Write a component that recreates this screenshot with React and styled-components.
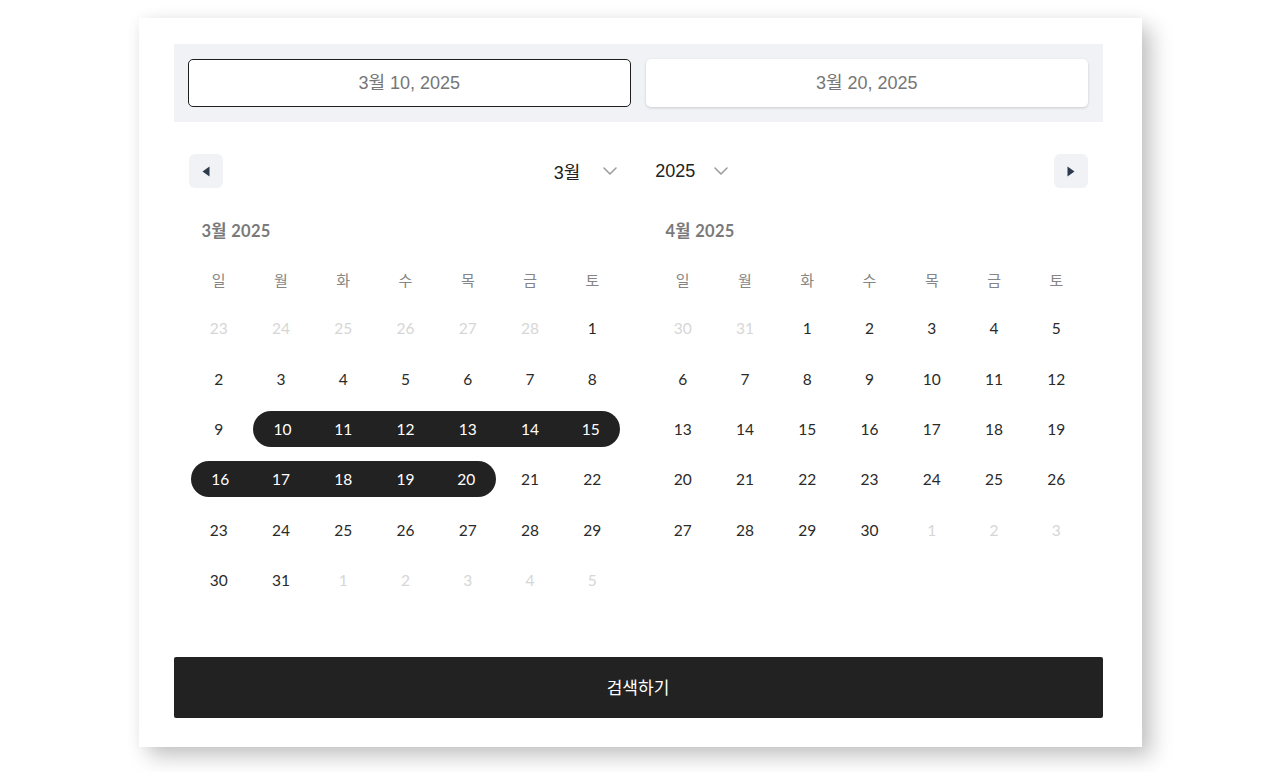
import React from "react";
import styled, { createGlobalStyle } from "styled-components";

const GlobalStyle = createGlobalStyle`
  * { box-sizing: border-box; }
  html, body { margin: 0; padding: 0; background: #ffffff; }
  body { font-family: "Liberation Sans", "Noto Sans CJK KR", sans-serif; }
`;

const Page = styled.div`
  width: 1280px;
  height: 772px;
  padding-top: 18px;
  display: flex;
  justify-content: center;
  align-items: flex-start;
`;

const Card = styled.div`
  width: 1003px;
  height: 729px;
  background: #fff;
  padding: 26px 39px 29px 35px;
  box-shadow: 10px 10px 20px rgba(0, 0, 0, 0.22), 0 0 14px rgba(0, 0, 0, 0.05);
  display: flex;
  flex-direction: column;
`;

const InputPanel = styled.div`
  background: #f0f2f5;
  padding: 15px 15px 15px 14px;
  display: flex;
  gap: 15px;
`;

const DateInput = styled.div`
  flex: 1;
  height: 48px;
  padding-bottom: 4px;
  border-radius: 5px;
  background: #fff;
  display: flex;
  align-items: center;
  justify-content: center;
  font-family: "Liberation Sans", "Noto Sans CJK KR", sans-serif;
  font-size: 18px;
  color: #767676;
  border: ${(p) => (p.$active ? "1.5px solid #1e1e1e" : "none")};
  box-shadow: ${(p) => (p.$active ? "none" : "0 1px 3px rgba(0,0,0,0.16)")};
`;

const NavRow = styled.div`
  margin-top: 32px;
  padding: 0 15px;
  height: 34px;
  display: flex;
  align-items: center;
  justify-content: space-between;
`;

const NavButton = styled.button`
  width: 34px;
  height: 34px;
  border: none;
  border-radius: 6px;
  background: #f0f2f5;
  display: flex;
  align-items: center;
  justify-content: center;
  padding: 0;
  cursor: pointer;
`;

const Selects = styled.div`
  display: flex;
  align-items: center;
  gap: 38px;
  margin-left: 6px;
`;

const Select = styled.div`
  display: flex;
  align-items: center;
  gap: ${(p) => p.$gap}px;
  font-family: "Liberation Sans", "Noto Sans CJK KR", sans-serif;
  font-size: 18px;
  color: #222;
`;

const Months = styled.div`
  margin-top: 33px;
  padding: 0 15px 0 14px;
  display: grid;
  grid-template-columns: 1fr 1fr;
  column-gap: 28px;
`;

const Month = styled.div`
  display: flex;
  flex-direction: column;
`;

const MonthTitle = styled.div`
  height: 20px;
  line-height: 20px;
  padding-left: 14px;
  font-family: "Lato", "Noto Sans CJK KR", sans-serif;
  font-weight: 700;
  font-size: 16.5px;
  letter-spacing: 0.3px;
  color: #7a7a7a;
  margin-bottom: 15px;
`;

const Grid = styled.div`
  display: grid;
  grid-template-columns: repeat(7, 1fr);
  grid-template-rows: 47px;
  grid-auto-rows: 50.4px;
`;

const WeekDay = styled.div`
  display: flex;
  align-items: center;
  justify-content: center;
  font-family: "Noto Sans CJK KR", sans-serif;
  font-size: 15px;
  color: #858585;
`;

const DayCell = styled.div`
  padding: 7.2px 0;
  display: flex;
`;

const DayInner = styled.div`
  flex: 1;
  display: flex;
  align-items: center;
  justify-content: center;
  font-family: "Lato", sans-serif;
  font-size: 15.5px;
  color: ${(p) => (p.$inRange ? "#fff" : p.$muted ? "#d6d6d6" : "#2a2a2a")};
  background: ${(p) => (p.$inRange ? "#222" : "transparent")};
  margin-left: ${(p) => (p.$start ? 3 : 0)}px;
  margin-right: ${(p) => (p.$end ? 3 : 0)}px;
  border-top-left-radius: ${(p) => (p.$start ? 18 : 0)}px;
  border-bottom-left-radius: ${(p) => (p.$start ? 18 : 0)}px;
  border-top-right-radius: ${(p) => (p.$end ? 18 : 0)}px;
  border-bottom-right-radius: ${(p) => (p.$end ? 18 : 0)}px;
`;

const Spacer = styled.div`
  flex: 1;
`;

const SearchButton = styled.button`
  height: 61px;
  width: 100%;
  padding-bottom: 4px;
  border: none;
  border-radius: 2px;
  background: #222;
  color: #fff;
  font-family: "Noto Sans CJK KR", sans-serif;
  font-weight: 400;
  font-size: 17px;
  cursor: pointer;
`;

const Chevron = () => (
  <svg width="14" height="8" viewBox="0 0 14 8" fill="none">
    <path d="M1 1l6 6 6-6" stroke="#9a9a9a" strokeWidth="1.5" strokeLinecap="round" strokeLinejoin="round" />
  </svg>
);

const TriLeft = () => (
  <svg width="8" height="11" viewBox="0 0 8 11">
    <path d="M7.5 0.5v10L0.5 5.5z" fill="#2b3a4d" />
  </svg>
);

const TriRight = () => (
  <svg width="8" height="11" viewBox="0 0 8 11">
    <path d="M0.5 0.5v10l7-5z" fill="#2b3a4d" />
  </svg>
);

const WEEK = ["일", "월", "화", "수", "목", "금", "토"];

function buildDays(year, month) {
  const first = new Date(year, month, 1).getDay();
  const daysIn = new Date(year, month + 1, 0).getDate();
  const prevDays = new Date(year, month, 0).getDate();
  const cells = [];
  for (let i = first - 1; i >= 0; i--) cells.push({ d: prevDays - i, muted: true });
  for (let d = 1; d <= daysIn; d++) cells.push({ d, muted: false });
  let n = 1;
  while (cells.length % 7 !== 0) cells.push({ d: n++, muted: true });
  return cells;
}

function MonthView({ title, year, month, rangeStart, rangeEnd }) {
  const cells = buildDays(year, month);
  return (
    <Month>
      <MonthTitle>{title}</MonthTitle>
      <Grid>
        {WEEK.map((w) => (
          <WeekDay key={w}>{w}</WeekDay>
        ))}
        {cells.map((c, i) => {
          const inRange = !c.muted && rangeStart != null && c.d >= rangeStart && c.d <= rangeEnd;
          const col = i % 7;
          const start = inRange && (c.d === rangeStart || col === 0);
          const end = inRange && (c.d === rangeEnd || col === 6);
          return (
            <DayCell key={i}>
              <DayInner $muted={c.muted} $inRange={inRange} $start={start} $end={end}>
                {c.d}
              </DayInner>
            </DayCell>
          );
        })}
      </Grid>
    </Month>
  );
}

export default function App() {
  return (
    <>
      <GlobalStyle />
      <Page>
        <Card>
          <InputPanel>
            <DateInput $active>3월 10, 2025</DateInput>
            <DateInput>3월 20, 2025</DateInput>
          </InputPanel>
          <NavRow>
            <NavButton aria-label="이전 달">
              <TriLeft />
            </NavButton>
            <Selects>
              <Select $gap={23}>
                <span>3월</span>
                <Chevron />
              </Select>
              <Select $gap={19}>
                <span>2025</span>
                <Chevron />
              </Select>
            </Selects>
            <NavButton aria-label="다음 달">
              <TriRight />
            </NavButton>
          </NavRow>
          <Months>
            <MonthView title="3월 2025" year={2025} month={2} rangeStart={10} rangeEnd={20} />
            <MonthView title="4월 2025" year={2025} month={3} />
          </Months>
          <Spacer />
          <SearchButton>검색하기</SearchButton>
        </Card>
      </Page>
    </>
  );
}
